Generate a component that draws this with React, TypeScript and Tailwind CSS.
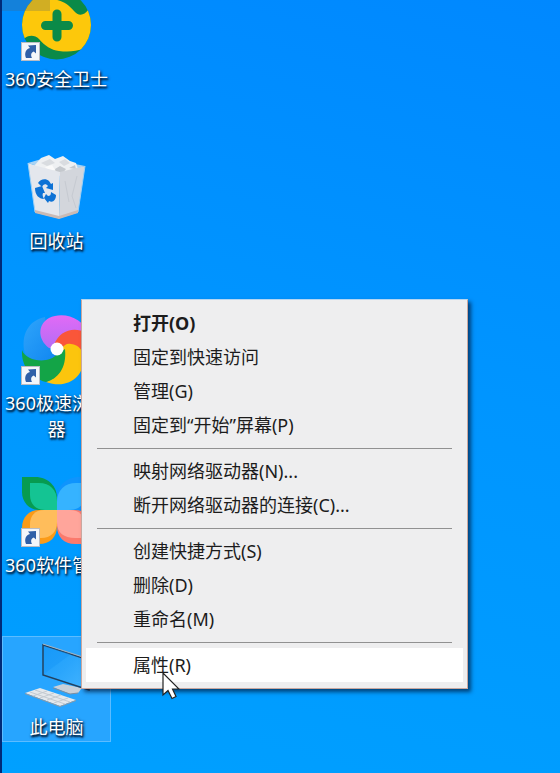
import React from 'react';
import clsx from 'clsx';

const ShortcutBadge: React.FC = () => (
  <g>
    <rect x="0.5" y="50.5" width="18" height="18" fill="#f4f6fa" stroke="#b9bcc4" />
    <path d="M5 66 C3 61 5 57 9 56 L7 53.500 L15 53 L15 61.500 L12.800 59.500 C10 60.500 9.500 63 11 66 Z" fill="#2f5fa8" />
  </g>
);

const iconClass = 'w-[72px] h-[72px] shrink-0 overflow-visible';

const SafeIcon: React.FC = () => (
  <svg viewBox="0 0 72 72" className={iconClass} aria-hidden="true">
    <defs>
      <clipPath id="safe-disc">
        <circle cx="35.5" cy="33" r="34.5" />
      </clipPath>
    </defs>
    <circle cx="35.5" cy="33" r="34.5" fill="#0b8a48" />
    <g clipPath="url(#safe-disc)">
      <path
        d="M-2 50 L4 46 C8 43 14 43 18 47 C24 54 30 58 38 59 C46 60 54 60 64 56 L76 44 V10 L67 18 C63 24 57 24 53 19 C47 12 41 8 30 7 L20 -4 L-4 10 Z"
        fill="#fdc80b"
      />
    </g>
    <path d="M36 22 V45 M24.500 33.500 H47.500" stroke="#0b8a48" strokeWidth="9" strokeLinecap="round" />
    <ShortcutBadge />
  </svg>
);

const RecycleIcon: React.FC = () => (
  <svg viewBox="0 0 72 72" className={iconClass} aria-hidden="true">
    <path d="M7 9 L24 4 L64 12 L40 20 Z" fill="#a9d3f4" />
    <path d="M13 12 L20 4 L28 1 L34 5 L42 2 L49 7 L55 9 L57 15 L40 22 L20 17 Z" fill="#eef0f2" />
    <path d="M20 9 L29 5 L34 9 L26 12 Z M38 8 L44 5 L49 9 L43 12 Z" fill="#d9dce0" />
    <path d="M34 15 L39 12 L45 15 L41 20 L35 19 Z M48 14 L54 11 L55 15 Z" fill="#c4c8cd" />
    <path d="M24 13 L31 11 L34 16 L28 17 Z" fill="#fafafa" />
    <path d="M7 9 L16 12 L39 18 L38 64 L14 58 Z" fill="#e4e7ed" />
    <path d="M39 18 L64 12 L57 58 L38 64 Z" fill="#d3d6dc" />
    <path d="M7 9 L14 58 L38 64 L57 58 L64 12" fill="none" stroke="#9fd0f5" />
    <path d="M44 27 L48 48 M56 22 L51 42 L55 54" stroke="#c6cad1" fill="none" />
    <path d="M14 56 L38 62 L57 56 L57 59 L38 65 L14 59 Z" fill="#c9bab5" />
    <g fill="#0d72d5">
      <path d="M17 29 C19 25 25 24 28 27 L30 30 L32 29 L32 36 L25 34 L27 32 C25 29 22 30 21 33 Z" />
      <path d="M14 34 L21 32 L24 39 L22 39 C21 41 22 43 23 45 C18 45 14 41 14 34 Z" />
      <path d="M25 40 L27 42 C29 42 30 41 30 38 L35 41 C35 46 32 49 28 47 L27 49 L23 44 Z" />
    </g>
  </svg>
);

const BrowserIcon: React.FC = () => (
  <svg viewBox="0 0 72 72" className={iconClass} aria-hidden="true">
    <defs>
      <linearGradient id="petal-blue" x1="0" y1="0" x2="1" y2="1">
        <stop offset="0" stopColor="#2fa5fb" />
        <stop offset="1" stopColor="#0f85f0" />
      </linearGradient>
      <linearGradient id="petal-pink" x1="0" y1="0" x2="0" y2="1">
        <stop offset="0" stopColor="#e26af5" />
        <stop offset="1" stopColor="#b26df6" />
      </linearGradient>
    </defs>
    <path d="M24 1 C8 4 -1 19 4 38 C12 47 24 49 37 44 L36 33 L25 8 Z" fill="url(#petal-blue)" />
    <path d="M28 32 C16 23 17 8 28 2 C42 -5 62 1 70 20 L50 24 L36 33 Z" fill="url(#petal-pink)" />
    <path d="M33 29 C38 14 54 10 65 17 C74 26 72 42 65 51 C62 36 52 29 40 31 Z" fill="#fa5639" />
    <path d="M40 33 C43 29 46 27 50 28 C58 29 62 34 62 42 C64 60 47 74 25 66 C37 62 44 52 42 37 Z" fill="#fcc50d" />
    <path d="M25 66 C36 63 46 53 44 33 L36 38 C29 48 5 46 1 34 C0 49 9 62 25 66 Z" fill="#13a447" />
    <circle cx="36" cy="33" r="6.500" fill="#fff" />
    <ShortcutBadge />
  </svg>
);

const SoftwareIcon: React.FC = () => (
  <svg viewBox="0 0 72 72" className={iconClass} aria-hidden="true">
    <path d="M1 -1 H14 C28 -1 36 9 36 20 V32 H18 C8 32 1 24 1 14 Z" fill="#079b50" />
    <path d="M9 5 H18 C29 5 36 12 36 23 V32 H24 C15 32 9 26 9 17 Z" fill="#14c493" />
    <path d="M36 20 C36 8 45 -1 58 -1 H71 V14 C71 25 64 32 54 32 H36 Z" fill="#0f94fd" />
    <path d="M36 24 C36 12 44 5 55 5 H64 V17 C64 26 58 32 48 32 H36 Z" fill="#36b3ff" />
    <path d="M18 32 H36 V48 C36 59 29 66 18 66 H1 V50 C1 39 8 32 18 32 Z" fill="#fb9b18" />
    <path d="M23 32 H36 V44 C36 54 30 60 20 60 H9 V46 C9 38 14 32 23 32 Z" fill="#ffbd5b" />
    <path d="M36 32 H54 C64 32 71 39 71 50 V66 H54 C43 66 36 59 36 48 Z" fill="#fb7a6d" />
    <path d="M36 32 H49 C58 32 64 38 64 47 V60 H54 C43 60 36 55 36 44 Z" fill="#ffa59b" />
    <ShortcutBadge />
  </svg>
);

const ComputerIcon: React.FC = () => (
  <svg viewBox="0 0 72 72" className={iconClass} aria-hidden="true">
    <defs>
      <linearGradient id="screen" x1="0" y1="0" x2="1" y2="1">
        <stop offset="0" stopColor="#1b9dfb" />
        <stop offset="0.5" stopColor="#2ba6fc" />
        <stop offset="1" stopColor="#45b5ff" />
      </linearGradient>
    </defs>
    <path d="M32 47 L42 44 L61 48 L57 53 L49 54 Z" fill="#c9d0d8" />
    <path d="M32 48 L49 54 L57 53" fill="none" stroke="#7c8ea0" />
    <path d="M22 5 L68 20 V50 L22 35 Z" fill="url(#screen)" stroke="#23415f" strokeWidth="1.500" />
    <path d="M22 4 L68 19" stroke="#a7b4c1" />
    <path d="M23 34 L50 14 L23 6 Z" fill="#1093f6" opacity="0.35" />
    <path d="M4 53 L19 48 L55 60 L39 66 Z" fill="#e4e8ec" />
    <path d="M4 53.500 L39 66.500 L55 60.500" fill="none" stroke="#8d9aa6" />
    <path d="M9 52 L44 64 M14 50 L49 62 M12 56 L26 51 M19 58 L33 53 M26 60 L40 55 M33 63 L47 58" stroke="#c3cad1" />
  </svg>
);

interface DesktopItem {
  label: string;
  Icon: React.FC;
  selected?: boolean;
}

const DESKTOP_ITEMS: DesktopItem[] = [
  { label: '360安全卫士', Icon: SafeIcon },
  { label: '回收站', Icon: RecycleIcon },
  { label: '360极速浏览器', Icon: BrowserIcon },
  { label: '360软件管家', Icon: SoftwareIcon },
  { label: '此电脑', Icon: ComputerIcon, selected: true },
];

const MENU_GROUPS = [
  ['打开(O)', '固定到快速访问', '管理(G)', '固定到“开始”屏幕(P)'],
  ['映射网络驱动器(N)...', '断开网络驱动器的连接(C)...'],
  ['创建快捷方式(S)', '删除(D)', '重命名(M)'],
  ['属性(R)'],
];

const DEFAULT_ITEM = '打开(O)';
const HOVERED_ITEM = '属性(R)';

const ContextMenu: React.FC = () => (
  <div
    role="menu"
    className="absolute left-[79px] top-[299px] w-[387px] border border-[#c9a79f] border-t-[#b4d6f2] bg-[#eeeeef] px-1 pt-[6px] pb-[6px] shadow-[3px_3px_4px_rgba(0,20,50,0.65)]"
  >
    {MENU_GROUPS.map((group, idx) => (
      <React.Fragment key={group[0]}>
        {idx > 0 && <hr className="mx-[11px] mt-[6px] mb-[5px] border-t border-[#919191]" />}
        {group.map((item) => (
          <button
            key={item}
            type="button"
            role="menuitem"
            className={clsx(
              'block h-[34px] w-full pl-[47px] text-left text-[18px] leading-[34px] text-[#1c1c1c]',
              item === DEFAULT_ITEM && 'font-bold',
              item === HOVERED_ITEM ? 'bg-white' : 'hover:bg-white'
            )}
          >
            {item}
          </button>
        ))}
      </React.Fragment>
    ))}
  </div>
);

const App: React.FC = () => {
  return (
    <main className="relative min-h-screen overflow-hidden border-l-2 border-[#002a78] bg-linear-[195deg] from-[#0088ff] via-[#0095ff] via-45% to-[#00a0ff] font-['Noto_Sans','Noto_Sans_CJK_SC',sans-serif]">
      {/* Desktop shortcuts */}
      <div className="-mt-3 flex flex-col items-start gap-14">
        {DESKTOP_ITEMS.map(({ label, Icon, selected }) => (
          <button
            key={label}
            type="button"
            className={clsx(
              'flex h-[106px] w-[109px] flex-col items-center gap-0.5 border pt-[3px]',
              selected ? 'border-[#5cbcff] bg-[#27a5ff]' : 'border-transparent'
            )}
          >
            <Icon />
            <span className="w-full text-center text-[18px] leading-[26px] break-all text-white [text-shadow:1px_2px_2px_#001c3a,1px_1px_3px_#001c3a]">
              {label}
            </span>
          </button>
        ))}
      </div>

      <div className="absolute -left-0.5 top-0 h-[11px] w-[50px] bg-[#50606c]/25" />

      <ContextMenu />

      {/* Mouse pointer */}
      <svg viewBox="0 0 18 28" className="absolute left-[160px] top-[672px] h-7 w-[18px]" aria-hidden="true">
        <path d="M1 1 V23 L6 18.500 L10 26.500 L14 24.500 L10.500 17 H17 Z" fill="#fff" stroke="#222" strokeWidth="1.200" />
      </svg>
    </main>
  );
};

export default App;
